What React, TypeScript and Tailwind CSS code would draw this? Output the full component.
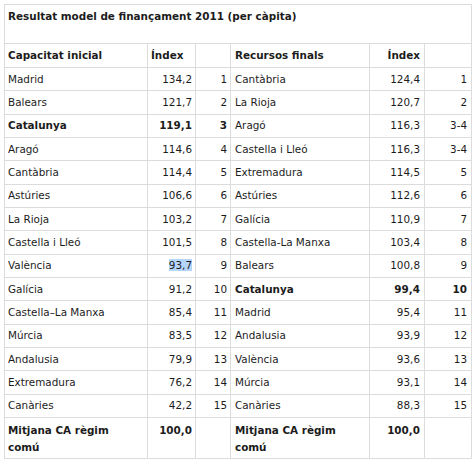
import React from "react";

type Row = { a: string; ai: string; ar: string; b: string; bi: string; br: string; boldA?: boolean; boldB?: boolean; hl?: boolean };

const rows: Row[] = [
  { a: "Madrid", ai: "134,2", ar: "1", b: "Cantàbria", bi: "124,4", br: "1" },
  { a: "Balears", ai: "121,7", ar: "2", b: "La Rioja", bi: "120,7", br: "2" },
  { a: "Catalunya", ai: "119,1", ar: "3", b: "Aragó", bi: "116,3", br: "3-4", boldA: true },
  { a: "Aragó", ai: "114,6", ar: "4", b: "Castella i Lleó", bi: "116,3", br: "3-4" },
  { a: "Cantàbria", ai: "114,4", ar: "5", b: "Extremadura", bi: "114,5", br: "5" },
  { a: "Astúries", ai: "106,6", ar: "6", b: "Astúries", bi: "112,6", br: "6" },
  { a: "La Rioja", ai: "103,2", ar: "7", b: "Galícia", bi: "110,9", br: "7" },
  { a: "Castella i Lleó", ai: "101,5", ar: "8", b: "Castella-La Manxa", bi: "103,4", br: "8" },
  { a: "València", ai: "93,7", ar: "9", b: "Balears", bi: "100,8", br: "9", hl: true },
  { a: "Galícia", ai: "91,2", ar: "10", b: "Catalunya", bi: "99,4", br: "10", boldB: true },
  { a: "Castella–La Manxa", ai: "85,4", ar: "11", b: "Madrid", bi: "95,4", br: "11" },
  { a: "Múrcia", ai: "83,5", ar: "12", b: "Andalusia", bi: "93,9", br: "12" },
  { a: "Andalusia", ai: "79,9", ar: "13", b: "València", bi: "93,6", br: "13" },
  { a: "Extremadura", ai: "76,2", ar: "14", b: "Múrcia", bi: "93,1", br: "14" },
  { a: "Canàries", ai: "42,2", ar: "15", b: "Canàries", bi: "88,3", br: "15" },
];

const td = "border border-[#dcdcdc] px-[3px] align-middle";

export default function App() {
  return (
    <div className="w-[474px] h-[463px] bg-white pt-[4px] pl-[4px] font-['DejaVu_Sans',sans-serif] text-[10.4px] leading-[17px] text-[#1c1c1c]">
      <table className="table-fixed border-collapse w-[467px]">
        <colgroup>
          <col className="w-[143px]" />
          <col className="w-[48px]" />
          <col className="w-[35px]" />
          <col className="w-[139px]" />
          <col className="w-[55px]" />
          <col className="w-[47px]" />
        </colgroup>
        <tbody>
          <tr className="h-[39px]">
            <td colSpan={6} className="border border-[#dcdcdc] px-[3px] pt-[3px] align-top font-bold">
              Resultat model de finançament 2011 (per càpita)
            </td>
          </tr>
          <tr className="h-[24px] font-bold">
            <td className={td}>Capacitat inicial</td>
            <td className={td}>Índex</td>
            <td className={td}></td>
            <td className={td + " pl-[4px]"}>Recursos finals</td>
            <td className={td + " text-right pr-[4px]"}>Índex</td>
            <td className={td}></td>
          </tr>
          {rows.map((r, i) => (
            <tr key={i} className="h-[23.33px]">
              <td className={td + (r.boldA ? " font-bold" : "")}>{r.a}</td>
              <td className={td + " text-right" + (r.boldA ? " font-bold" : "")}>
                {r.hl ? <span className="bg-[#b5d5fd]">{r.ai}</span> : r.ai}
              </td>
              <td className={td + " text-right" + (r.boldA ? " font-bold" : "")}>{r.ar}</td>
              <td className={td + " pl-[4px]" + (r.boldB ? " font-bold" : "")}>{r.b}</td>
              <td className={td + " text-right pr-[4px]" + (r.boldB ? " font-bold" : "")}>{r.bi}</td>
              <td className={td + " text-right pr-[4px]" + (r.boldB ? " font-bold" : "")}>{r.br}</td>
            </tr>
          ))}
          <tr className="h-[41px] font-bold">
            <td className="border border-[#dcdcdc] px-[3px] pt-[4px] align-top">Mitjana CA règim<br />comú</td>
            <td className="border border-[#dcdcdc] px-[3px] pt-[4px] align-top text-right">100,0</td>
            <td className="border border-[#dcdcdc]"></td>
            <td className="border border-[#dcdcdc] pl-[4px] pr-[3px] pt-[4px] align-top">Mitjana CA règim<br />comú</td>
            <td className="border border-[#dcdcdc] pr-[4px] pt-[4px] align-top text-right">100,0</td>
            <td className="border border-[#dcdcdc]"></td>
          </tr>
        </tbody>
      </table>
    </div>
  );
}
